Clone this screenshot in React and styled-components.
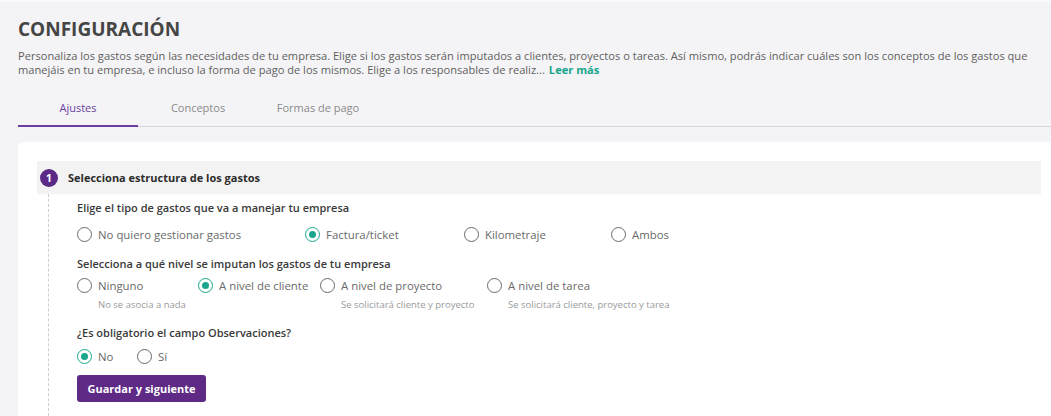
import styled, { createGlobalStyle } from "styled-components"

const GlobalStyle = createGlobalStyle`
    body {
        margin: 0;
        background-color: #f4f4f6;
        font-family: "Open Sans", "Liberation Sans", sans-serif;
    }
`

const tipos = [
    { label: "No quiero gestionar gastos", width: 228 },
    { label: "Factura/ticket", width: 159, checked: true },
    { label: "Kilometraje", width: 147 },
    { label: "Ambos" },
]

const niveles = [
    { label: "Ninguno", hint: "No se asocia a nada", width: 121 },
    { label: "A nivel de cliente", width: 122, checked: true },
    { label: "A nivel de proyecto", hint: "Se solicitará cliente y proyecto", width: 167 },
    { label: "A nivel de tarea", hint: "Se solicitará cliente, proyecto y tarea" },
]

const observaciones = [
    { label: "No", width: 60, checked: true },
    { label: "Sí" },
]

function RadioGroup({ options }) {
    return (
        <Options>
            {options.map((o) => (
                <Option key={o.label} style={o.width ? { width: o.width } : undefined}>
                    <OptionMain>
                        <Radio $checked={o.checked} />
                        <OptionLabel>{o.label}</OptionLabel>
                    </OptionMain>
                    {o.hint && <Hint>{o.hint}</Hint>}
                </Option>
            ))}
        </Options>
    )
}

export default function App() {
    return (
        <Page>
            <GlobalStyle />
            <Title>CONFIGURACIÓN</Title>
            <Description>
                Personaliza los gastos según las necesidades de tu empresa. Elige si los gastos serán imputados a clientes, proyectos o tareas. Así mismo, podrás indicar cuáles son los conceptos de los gastos que manejáis en tu empresa, e incluso la forma de pago de los mismos. Elige a los responsables de realiz...<ReadMore>Leer más</ReadMore>
            </Description>

            <Tabs>
                <Tab $active>Ajustes</Tab>
                <Tab>Conceptos</Tab>
                <Tab>Formas de pago</Tab>
            </Tabs>

            <Card>
                <StepHeader>
                    <StepNumber>1</StepNumber>
                    <StepTitle>Selecciona estructura de los gastos</StepTitle>
                </StepHeader>
                <StepBody>
                    <Question $gap={10}>Elige el tipo de gastos que va a manejar tu empresa</Question>
                    <RadioGroup options={tipos} />

                    <Question $gap={5}>Selecciona a qué nivel se imputan los gastos de tu empresa</Question>
                    <RadioGroup options={niveles} />

                    <Question $gap={7}>¿Es obligatorio el campo Observaciones?</Question>
                    <RadioGroup options={observaciones} />

                    <SaveButton>Guardar y siguiente</SaveButton>
                </StepBody>
            </Card>
        </Page>
    )
}

const Page = styled.div`
    padding: 15px 0 0 18px;
    height: 416px;
    box-sizing: border-box;
    overflow: hidden;
    border-top: 2px solid #f9f9fa;
`

const Title = styled.h1`
    margin: 0;
    font-size: 19px;
    font-weight: 700;
    color: #454545;
    line-height: 24px;
`

const Description = styled.p`
    margin: 8px 12px 0 0;
    font-size: 11.1px;
    line-height: 14px;
    color: #5f5f5f;
`

const ReadMore = styled.a`
    margin-left: 4px;
    color: #17a58c;
    font-weight: 700;
    cursor: pointer;
`

const Tabs = styled.div`
    display: flex;
    margin-top: 20px;
    border-bottom: 1px solid #d6d6d8;
`

const Tab = styled.div`
    width: 120px;
    text-align: center;
    font-size: 11px;
    line-height: 14px;
    padding: 4px 0 10px;
    color: ${(p) => (p.$active ? "#6b3fa0" : "#8a8a8a")};
    border-bottom: 2px solid ${(p) => (p.$active ? "#6b3fa0" : "transparent")};
    margin-bottom: -1px;
`

const Card = styled.div`
    margin-top: 15px;
    background: #fff;
    border-top-left-radius: 6px;
    padding: 19px 10px 0 19px;
    height: 300px;
`

const StepHeader = styled.div`
    display: flex;
    align-items: center;
    height: 33px;
    background: #f3f3f3;
    padding-left: 3px;
`

const StepNumber = styled.div`
    width: 18px;
    height: 18px;
    border-radius: 50%;
    background: #5b2a86;
    color: #fff;
    font-size: 11px;
    font-weight: 700;
    display: flex;
    align-items: center;
    justify-content: center;
    margin-right: 10px;
`

const StepTitle = styled.div`
    font-size: 11px;
    font-weight: 700;
    color: #2c2c2c;
`

const StepBody = styled.div`
    margin-left: 11px;
    border-left: 1px dashed #cfcfcf;
    padding: 6px 0 14px 28px;
`

const Question = styled.div`
    font-size: 11px;
    font-weight: 600;
    color: #3a3a3a;
    line-height: 16px;
    margin-bottom: ${(p) => p.$gap}px;
`

const Options = styled.div`
    display: flex;
    align-items: flex-start;
    margin-bottom: 14px;
`

const Option = styled.div`
    display: flex;
    flex-direction: column;
`

const OptionMain = styled.label`
    display: flex;
    align-items: center;
    gap: 6px;
    height: 16px;
`

const Radio = styled.span`
    box-sizing: border-box;
    flex-shrink: 0;
    width: 15px;
    height: 15px;
    border-radius: 50%;
    border: 1.5px solid ${(p) => (p.$checked ? "#1aa68d" : "#6a6a6a")};
    display: flex;
    align-items: center;
    justify-content: center;

    &::after {
        content: "";
        width: 7px;
        height: 7px;
        border-radius: 50%;
        background: ${(p) => (p.$checked ? "#1aa68d" : "transparent")};
    }
`

const OptionLabel = styled.span`
    font-size: 11.4px;
    color: #6a6a6a;
`

const Hint = styled.span`
    font-size: 9.5px;
    color: #9a9a9a;
    margin: 5px 0 0 21px;
    white-space: nowrap;
`

const SaveButton = styled.button`
    display: block;
    border: none;
    border-radius: 3px;
    background: #5e2a86;
    color: #fff;
    font-family: inherit;
    font-size: 11px;
    font-weight: 700;
    width: 129px;
    height: 27px;
    margin-top: -3px;
`
